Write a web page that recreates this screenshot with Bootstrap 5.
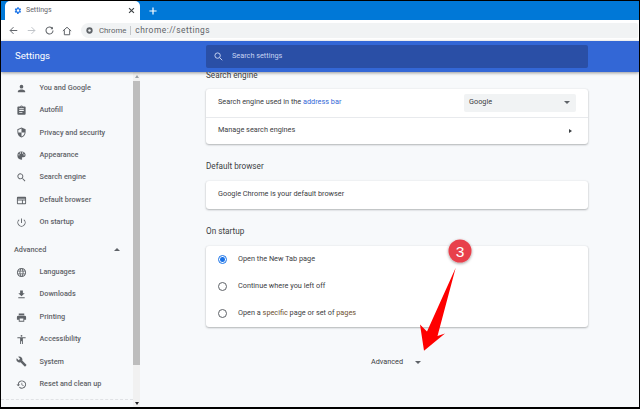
<!DOCTYPE html>
<html><head><meta charset="utf-8"><title>Settings</title>
<link href="https://cdn.jsdelivr.net/npm/bootstrap@5.3.0/dist/css/bootstrap.min.css" rel="stylesheet">
<style>
html,body{height:100%;margin:0;overflow:hidden}
body{font-family:Roboto,"Liberation Sans",sans-serif;font-size:8px;color:#3c4043;background:#000}
.win{position:relative;width:638px;height:406px;margin:1px 1px 2px 1px;background:#f7f9fb;overflow:hidden}
.strip{height:19px;background:#0078d7}
.tabx{width:135px;margin-left:4px;height:19px;background:#fff;border-radius:5px 5px 0 0;color:#5f6368;padding:0 5px 0 8px;font-size:7px}
.newtab{width:25px;color:#fff;line-height:1}
.tool{height:21px;background:#fff;padding:0 1px 0 3px}
.omni{flex:1;height:15px;background:#f1f3f4;border-radius:8px 2px 2px 8px;margin-left:5px;padding-left:5px;color:#5f6368;font-size:7.800px}
.omni svg{margin-right:6px}
.omni i{display:block;width:1px;height:9px;background:#c4c7ca;margin:0 4px}
.omni-url{font-size:8.400px;letter-spacing:.5px}
.tb{width:18px;display:flex;justify-content:center}
.hdr{height:31px;background:#3367d6;color:#fff;padding-left:14px;box-shadow:0 1px 3px rgba(0,0,0,.4);position:relative;z-index:2}
.hdr-t{width:191px;font-size:9.600px}
.srch{width:382px;height:23px;background:#2a4fa6;border-radius:2px;color:#c6d3f2;padding-left:8px;gap:9px;font-size:7.300px}
.bodyrow{height:335px}
.side{width:132px;background:#f7f9fb;color:#5f6368;font-weight:500;font-size:7.300px;padding-top:5px;height:328px;border-bottom:1px dashed #e0e2e5}
.sitem{height:22.400px;padding-left:14.500px}
.sitem svg{width:11px;height:11px;margin-right:13px;flex:none;fill:#5f6368}
.sadv{height:27.500px;padding:5px 13px 0 13px}
.bar{width:7px;background:#f1f1f1;position:relative}
.thumb{width:7px;height:284px;margin-top:9px;background:#bdbdbd}
.sc-u,.sc-d{position:absolute;left:1.500px;width:0;height:0;border-left:2px solid transparent;border-right:2px solid transparent}
.sc-u{top:3px;border-bottom:3px solid #9aa0a6}
.sc-d{bottom:2px;border-top:3px solid #202124}
.mainp{flex:1;padding-left:66px;overflow:hidden;color:#3c4043}
.h-sec{font-size:8.200px;font-weight:400;margin:0;color:#3c4043;line-height:12px}
.sec1{margin-top:-3px}
.sec2{margin-top:16px}
.sec3{margin-top:16.500px}
.cardx{width:382px;background:#fff;border-radius:3px;box-shadow:0 1px 2px rgba(60,64,67,.35),0 0 2px rgba(60,64,67,.1);font-size:7.300px;margin-top:9px}
.sec1+.cardx{margin-top:8px}
.rowx{height:27.500px;padding:0 12px}
.rowx+.rowx{border-top:1px solid #e8eaed}
.pick{width:112px;height:18px;background:#f1f3f4;border-radius:2px;padding:0 6px 0 5px}
.tri-d{width:0;height:0;border-left:3px solid transparent;border-right:3px solid transparent;border-top:3px solid #5f6368}
.tri-u{width:0;height:0;border-left:3px solid transparent;border-right:3px solid transparent;border-bottom:3px solid #5f6368}
.tri-r{width:0;height:0;border-top:2.500px solid transparent;border-bottom:2.500px solid transparent;border-left:3px solid #3c4043}
.lnk{color:#3367d6}
.lnk2{color:#6e5030}
.rad{width:9px;height:9px;border:1.300px solid #5f6368;border-radius:50%;margin-right:11px;flex:none}
.rad.on{border-color:#1a73e8;position:relative}
.rad.on::after{content:"";position:absolute;inset:1.200px;border-radius:50%;background:#1a73e8}
.radrow{height:27px;padding-left:12px}
.advx{width:382px;height:20px;margin-top:25px;gap:12px;font-size:7.300px;color:#3c4043;padding-right:2px}
.over{position:absolute;left:0;top:0;width:638px;height:406px;pointer-events:none;z-index:5}
.badge3{font:500 15.500px "Liberation Sans",sans-serif;fill:#fff}
</style></head><body>
<div class="win">
 <div class="strip d-flex align-items-end">
  <div class="tabx d-flex align-items-center gap-1">
   <svg width="9" height="9" viewBox="0 0 24 24" fill="#1a73e8"><path d="M19.400 13c.04-.3.1-.65.1-1s-.06-.7-.1-1l2.100-1.650-2-3.460-2.500 1a7 7 0 0 0-1.700-1L15.400 3h-4l-.4 2.900a7 7 0 0 0-1.700 1l-2.500-1-2 3.460L6.500 11c-.04.3-.1.65-.1 1s.06.7.1 1l-2.100 1.650 2 3.460 2.500-1a7 7 0 0 0 1.700 1l.4 2.890h4l.4-2.900a7 7 0 0 0 1.700-1l2.500 1 2-3.460zM13.400 15.500a3.500 3.500 0 1 1 0-7 3.500 3.500 0 0 1 0 7z"/></svg>
   <span class="flex-grow-1">Settings</span>
   <svg width="7" height="7" viewBox="0 0 10 10" stroke="#3c4043" stroke-width="1.600"><path d="M1.500 1.500l7 7M8.500 1.500l-7 7"/></svg>
  </div>
  <div class="newtab d-flex justify-content-center align-items-center h-100"><svg width="8" height="8" viewBox="0 0 10 10" stroke="#fff" stroke-width="1.500"><path d="M5 .5v9M.5 5h9"/></svg></div>
 </div>
 <div class="tool d-flex align-items-center">
  <span class="tb"><svg width="9" height="9" viewBox="0 0 12 12" fill="none" stroke="#5f6368" stroke-width="1.300"><path d="M11 6H1.500M6 1.500L1.500 6 6 10.500"/></svg></span>
  <span class="tb"><svg width="9" height="9" viewBox="0 0 12 12" fill="none" stroke="#bdc1c6" stroke-width="1.300"><path d="M1 6h9.500M6 1.500L10.500 6 6 10.500"/></svg></span>
  <span class="tb"><svg width="9" height="9" viewBox="0 0 12 12" fill="none" stroke="#5f6368" stroke-width="1.400"><path d="M10 3.500A4.700 4.700 0 1 0 10.700 6"/><path d="M10.500 1v3.200H7.300" fill="#5f6368" stroke="none"/></svg></span>
  <span class="tb"><svg width="10" height="10" viewBox="0 0 12 12" fill="none" stroke="#5f6368" stroke-width="1.200"><path d="M1 6l5-4.500L11 6M2.800 5v5.500h6.400V5"/></svg></span>
  <div class="omni d-flex align-items-center">
   <svg width="7" height="7" viewBox="0 0 10 10"><circle cx="5" cy="5" r="4.500" fill="#5f6368"/><circle cx="5" cy="5" r="1.800" fill="#f1f3f4"/></svg>
   <span>Chrome</span><i></i><span class="omni-url">chrome://settings</span>
  </div>
 </div>
 <div class="hdr d-flex align-items-center">
  <div class="hdr-t">Settings</div>
  <div class="srch d-flex align-items-center">
   <svg width="9" height="9" viewBox="0 0 12 12" fill="none" stroke="#c6d3f2" stroke-width="1.300"><circle cx="4.800" cy="4.800" r="3.600"/><path d="M7.500 7.500L11 11"/></svg>
   <span>Search settings</span>
  </div>
 </div>
 <div class="bodyrow d-flex">
  <div class="side">
   <div class="sitem d-flex align-items-center"><svg viewBox="0 0 24 24"><path d="M12 12a4 4 0 1 0 0-8 4 4 0 0 0 0 8zm0 2c-2.700 0-8 1.300-8 4v2h16v-2c0-2.700-5.300-4-8-4z"/></svg>You and Google</div>
   <div class="sitem d-flex align-items-center"><svg viewBox="0 0 24 24"><path d="M19 3h-4.200a3 3 0 0 0-5.600 0H5a2 2 0 0 0-2 2v14a2 2 0 0 0 2 2h14a2 2 0 0 0 2-2V5a2 2 0 0 0-2-2zm-7 0a1 1 0 1 1 0 2 1 1 0 0 1 0-2zm2 14H7v-2h7zm3-4H7v-2h10zm0-4H7V7h10z"/></svg>Autofill</div>
   <div class="sitem d-flex align-items-center"><svg viewBox="0 0 24 24"><path d="M12 1L3 5v6c0 5.500 3.800 10.700 9 12 5.200-1.300 9-6.500 9-12V5zm0 11h7c-.5 4.100-3.300 7.800-7 8.900V12H5V6.300l7-3.100z"/></svg>Privacy and security</div>
   <div class="sitem d-flex align-items-center"><svg viewBox="0 0 24 24"><path d="M12 3a9 9 0 0 0 0 18c.8 0 1.500-.7 1.500-1.500 0-.4-.1-.7-.4-1-.2-.3-.4-.6-.4-1 0-.8.7-1.500 1.500-1.500H16a5 5 0 0 0 5-5c0-4.400-4-8-9-8zM6.500 12a1.500 1.500 0 1 1 0-3 1.500 1.500 0 0 1 0 3zm3-4a1.500 1.500 0 1 1 0-3 1.500 1.500 0 0 1 0 3zm5 0a1.500 1.500 0 1 1 0-3 1.500 1.500 0 0 1 0 3zm3 4a1.500 1.500 0 1 1 0-3 1.500 1.500 0 0 1 0 3z"/></svg>Appearance</div>
   <div class="sitem d-flex align-items-center"><svg viewBox="0 0 24 24"><path d="M15.500 14h-.8l-.3-.3a6.500 6.500 0 1 0-.7.7l.3.3v.8l5 5 1.500-1.500zm-6 0a4.500 4.500 0 1 1 0-9 4.500 4.500 0 0 1 0 9z"/></svg>Search engine</div>
   <div class="sitem d-flex align-items-center"><svg viewBox="0 0 24 24"><path d="M20 4H4a2 2 0 0 0-2 2v12a2 2 0 0 0 2 2h16a2 2 0 0 0 2-2V6a2 2 0 0 0-2-2zM4 18v-6h9v6zm16 0h-5v-6h5zm0-8H4V8h16z"/></svg>Default browser</div>
   <div class="sitem d-flex align-items-center"><svg viewBox="0 0 24 24"><path d="M13 3h-2v10h2zm4.800 2.200l-1.400 1.400A7 7 0 1 1 7.600 6.600L6.200 5.200a9 9 0 1 0 11.600 0z"/></svg>On startup</div>
   <div class="sadv d-flex align-items-center justify-content-between"><span>Advanced</span><span class="tri-u"></span></div>
   <div class="sitem d-flex align-items-center"><svg viewBox="0 0 24 24"><path d="M12 2a10 10 0 1 0 0 20 10 10 0 0 0 0-20zm7 6h-3a15 15 0 0 0-1.400-3.600A8 8 0 0 1 19 8zm-7-4c.8 1.200 1.500 2.500 1.900 4h-3.800c.4-1.500 1.100-2.800 1.900-4zM4.300 14a8 8 0 0 1 0-4h3.400a16 16 0 0 0 0 4zm.8 2h3a15 15 0 0 0 1.400 3.600A8 8 0 0 1 5 16zm3-8H5a8 8 0 0 1 4.400-3.600A15 15 0 0 0 8.100 8zM12 20c-.8-1.200-1.500-2.500-1.900-4h3.800c-.4 1.500-1.100 2.800-1.900 4zm2.300-6H9.700a15 15 0 0 1 0-4h4.600a15 15 0 0 1 0 4zm.3 5.600a15 15 0 0 0 1.400-3.600h3a8 8 0 0 1-4.400 3.600zm1.700-5.600a16 16 0 0 0 0-4h3.400a8 8 0 0 1 0 4z"/></svg>Languages</div>
   <div class="sitem d-flex align-items-center"><svg viewBox="0 0 24 24"><path d="M19 9h-4V3H9v6H5l7 7zM5 18v2h14v-2z"/></svg>Downloads</div>
   <div class="sitem d-flex align-items-center"><svg viewBox="0 0 24 24"><path d="M19 8H5a3 3 0 0 0-3 3v6h4v4h12v-4h4v-6a3 3 0 0 0-3-3zm-3 11H8v-5h8zM18 3H6v4h12z"/></svg>Printing</div>
   <div class="sitem d-flex align-items-center"><svg viewBox="0 0 24 24"><path d="M12 2a2 2 0 1 1 0 4 2 2 0 0 1 0-4zm9 7h-6v13h-2v-6h-2v6H9V9H3V7h18z"/></svg>Accessibility</div>
   <div class="sitem d-flex align-items-center"><svg viewBox="0 0 24 24"><path d="M22.700 19l-9.100-9.100c.9-2.300.4-5-1.500-6.900-2-2-5-2.400-7.400-1.300L9 6 6 9 1.600 4.700C.4 7.100.9 10.100 2.900 12.100c1.900 1.900 4.600 2.400 6.900 1.500l9.100 9.100c.4.400 1 .4 1.400 0l2.300-2.300c.5-.4.500-1.100.1-1.400z"/></svg>System</div>
   <div class="sitem d-flex align-items-center"><svg viewBox="0 0 24 24"><path d="M13 3a9 9 0 0 0-9 9H1l4 4 4-4H6a7 7 0 1 1 2 4.900l-1.400 1.500A9 9 0 1 0 13 3zm-1 5v5l4.300 2.500.7-1.200-3.500-2.100V8z"/></svg>Reset and clean up</div>
  </div>
  <div class="bar"><span class="sc-u"></span><div class="thumb"></div><span class="sc-d"></span></div>
  <div class="mainp">
   <h2 class="h-sec sec1">Search engine</h2>
   <div class="cardx">
    <div class="rowx d-flex align-items-center justify-content-between"><span>Search engine used in the <span class="lnk">address bar</span></span><div class="pick d-flex align-items-center justify-content-between"><span>Google</span><span class="tri-d"></span></div></div>
    <div class="rowx d-flex align-items-center justify-content-between"><span>Manage search engines</span><span class="tri-r me-1"></span></div>
   </div>
   <h2 class="h-sec sec2">Default browser</h2>
   <div class="cardx"><div class="rowx d-flex align-items-center">Google Chrome is your default browser</div></div>
   <h2 class="h-sec sec3">On startup</h2>
   <div class="cardx">
    <div class="radrow d-flex align-items-center"><span class="rad on"></span>Open the New Tab page</div>
    <div class="radrow d-flex align-items-center"><span class="rad"></span>Continue where you left off</div>
    <div class="radrow d-flex align-items-center"><span class="rad"></span><span>Open a <span class="lnk2">specific</span> page or set of <span class="lnk2">pages</span></span></div>
   </div>
   <div class="advx d-flex align-items-center justify-content-center"><span>Advanced</span><span class="tri-d"></span></div>
  </div>
 </div>
 <svg class="over" viewBox="0 0 638 406">
  <defs><filter id="sh" x="-30%" y="-30%" width="160%" height="160%"><feDropShadow dx="0" dy="1" stdDeviation="1.500" flood-color="#000" flood-opacity=".4"/></filter></defs>
  <path d="M454.700 266.700L436.500 335 444 332.500 423 349.700 419 323.500 426 330.500z" fill="#fe0000"/>
  <circle cx="459" cy="250" r="11.500" fill="#e8404c" filter="url(#sh)"/>
  <text x="459" y="255.500" text-anchor="middle" class="badge3">3</text>
 </svg>
</div>
<script src="https://cdn.jsdelivr.net/npm/bootstrap@5.3.0/dist/js/bootstrap.bundle.min.js"></script>
</body></html>
